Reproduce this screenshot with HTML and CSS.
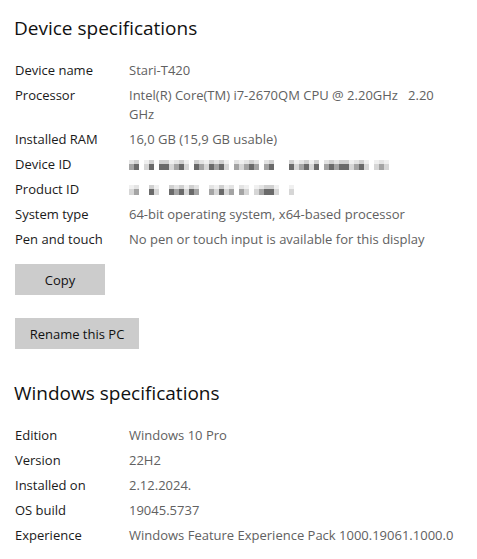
FILE: index.html
```html
<!DOCTYPE html>
<html lang="en">
<head>
<meta charset="utf-8">
<title>About</title>
<link rel="stylesheet" href="styles.css">
</head>
<body>
<main class="page">
  <section class="section">
    <h2 class="heading">Device specifications</h2>
    <dl class="specs">
      <div class="row"><dt class="label">Device name</dt><dd class="value">Stari-T420</dd></div>
      <div class="row"><dt class="label">Processor</dt><dd class="value">Intel(R) Core(TM) i7-2670QM CPU @ 2.20GHz&nbsp;&nbsp;&nbsp;2.20<br>GHz</dd></div>
      <div class="row"><dt class="label">Installed RAM</dt><dd class="value">16,0 GB (15,9 GB usable)</dd></div>
      <div class="row"><dt class="label">Device ID</dt><dd class="value"><span class="blur" aria-label="hidden"><i class="s2"></i><i class="s3"></i><i></i><i class="s1"></i><i class="s3"></i><i></i><i class="s3"></i><i class="s3"></i><i class="s1"></i><i class="s2"></i><i class="s3"></i><i class="s1"></i><i></i><i class="s3"></i><i class="s2"></i><i class="s1"></i><i class="s3"></i><i class="s2"></i><i class="s3"></i><i class="s1"></i><i></i><i class="s2"></i><i class="s1"></i><i class="s2"></i><i class="s3"></i><i class="s2"></i><i></i><i class="s2"></i><i class="s3"></i><i></i><i></i><i></i><i class="s3"></i><i class="s1"></i><i class="s2"></i><i class="s3"></i><i class="s1"></i><i class="s3"></i><i></i><i class="s2"></i><i class="s3"></i><i class="s2"></i><i class="s3"></i><i class="s3"></i><i class="s1"></i><i class="s2"></i><i class="s3"></i><i class="s1"></i><i></i><i class="s1"></i><i class="s2"></i><i class="s1"></i></span></dd></div>
      <div class="row"><dt class="label">Product ID</dt><dd class="value"><span class="blur" aria-label="hidden"><i class="s1"></i><i class="s2"></i><i></i><i></i><i class="s3"></i><i class="s1"></i><i></i><i></i><i class="s3"></i><i class="s2"></i><i class="s3"></i><i class="s1"></i><i class="s3"></i><i class="s2"></i><i></i><i></i><i class="s2"></i><i class="s1"></i><i class="s3"></i><i class="s1"></i><i class="s2"></i><i></i><i class="s2"></i><i class="s1"></i><i></i><i class="s1"></i><i class="s2"></i><i class="s3"></i><i class="s3"></i><i class="s1"></i><i></i><i></i><i class="s1"></i></span></dd></div>
      <div class="row"><dt class="label">System type</dt><dd class="value">64-bit operating system, x64-based processor</dd></div>
      <div class="row"><dt class="label">Pen and touch</dt><dd class="value">No pen or touch input is available for this display</dd></div>
    </dl>
    <div class="actions">
      <button class="btn btn-copy" type="button">Copy</button>
      <button class="btn btn-rename" type="button">Rename this PC</button>
    </div>
  </section>
  <section class="section">
    <h2 class="heading heading-second">Windows specifications</h2>
    <dl class="specs">
      <div class="row"><dt class="label">Edition</dt><dd class="value">Windows 10 Pro</dd></div>
      <div class="row"><dt class="label">Version</dt><dd class="value">22H2</dd></div>
      <div class="row"><dt class="label">Installed on</dt><dd class="value">2.12.2024.</dd></div>
      <div class="row"><dt class="label">OS build</dt><dd class="value">19045.5737</dd></div>
      <div class="row"><dt class="label">Experience</dt><dd class="value">Windows Feature Experience Pack 1000.19061.1000.0</dd></div>
    </dl>
  </section>
</main>
</body>
</html>
```

FILE: styles.css
```css
* { box-sizing: border-box; }
html, body { margin: 0; padding: 0; background: #ffffff; }
body {
  font-family: "Open Sans", "Noto Sans", "Liberation Sans", sans-serif;
  color: #1a1a1a;
  overflow: hidden;
}
.page { padding: 0 0 0 15px; }
.heading {
  margin: 0;
  font-weight: 400;
  font-size: 19px;
  line-height: 28px;
  padding-top: 14px;
  color: #111;
  margin-left: -1px;
}
.heading-second { padding-top: 30px; }
.specs { margin: 16px 0 0 0; }
.row {
  display: flex;
  padding: 3px 0;
  line-height: 19px;
  font-size: 13px;
}
.label { width: 114px; flex: none; margin: 0; color: #1a1a1a; }
.value { margin: 0; color: #616161; }
.blur { display: flex; height: 19px; align-items: center; padding-top: 1px; }
.blur i { display: block; width: 5px; height: 10px; }
.blur .s1 { background: linear-gradient(#f0f0f0 0 45%, #d6d6d6 45%); }
.blur .s2 { background: linear-gradient(#e4e4e4 0 45%, #a4a4a4 45%); }
.blur .s3 { background: linear-gradient(#d0d0d0 0 45%, #6a6a6a 45%); }
.actions {
  display: flex;
  flex-direction: column;
  align-items: flex-start;
  gap: 23px;
  padding-top: 12px;
}
.btn {
  font: inherit;
  font-size: 13px;
  color: #111;
  background: #cccccc;
  border: 0;
  height: 31px;
  padding: 0 14px;
  margin: 0;
}
.btn-copy { width: 90px; }
.btn-rename { width: 124px; }
```
